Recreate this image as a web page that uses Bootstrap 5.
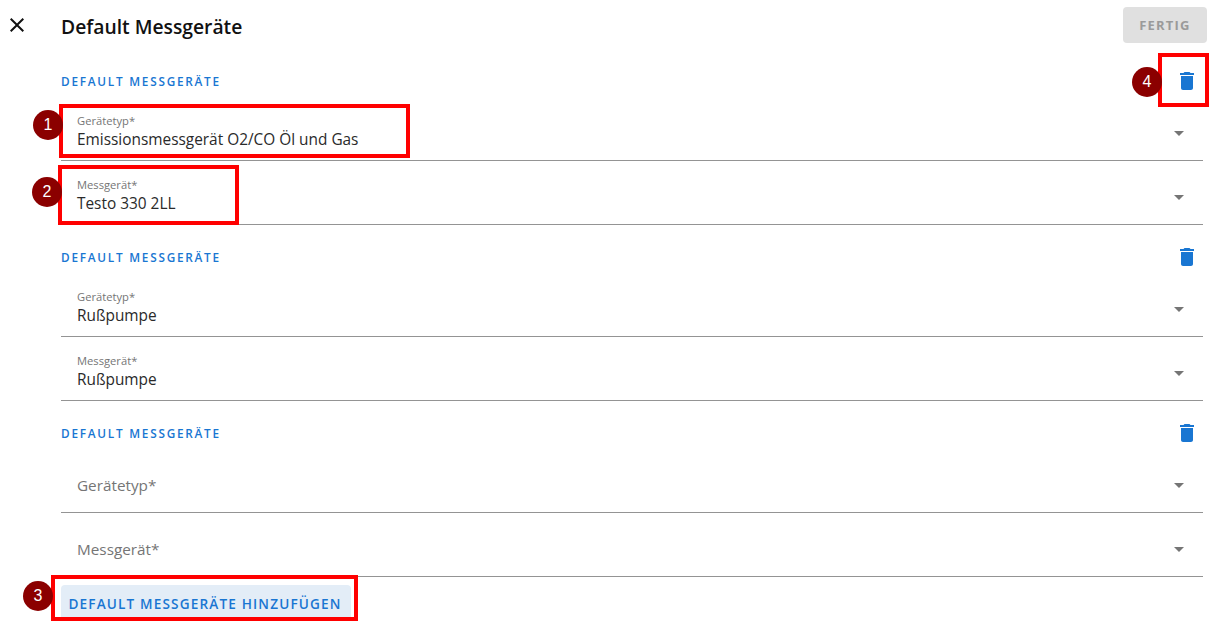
<!DOCTYPE html>
<html lang="de">
<head>
  <meta charset="UTF-8">
  <title>Default Messgeräte</title>
  <link href="https://cdn.jsdelivr.net/npm/bootstrap@5.3.0/dist/css/bootstrap.min.css" rel="stylesheet">
  <style>
    html, body { height: 621px; overflow: hidden; }
    body { font-family: "Open Sans", "Noto Sans", sans-serif; color: #1f1f1f; background: #fff; position: relative; }
    .top-bar { height: 49px; padding: 7px 4px 0 5px; }
    .close-btn { width: 56px; height: 36px; }
    .page-title { font-size: 19.3px; font-weight: 600; color: #111; line-height: 40px; margin: 0; }
    .done-btn { width: 84px; height: 36px; background: #e0e0e0; color: #9a9a9a; border: 0; border-radius: 4px; font-size: 13px; font-weight: 700; letter-spacing: 1.2px; padding: 2px 0 0; }
    .form-area { padding: 0 8px 0 61px; }
    .group-head { height: 48px; padding-top: 16px; }
    .group-title { font-size: 11.8px; font-weight: 600; letter-spacing: 1.75px; color: #1976d2; line-height: 16px; }
    .trash { width: 14px; height: 18px; margin-right: 9px; }
    .field-row { height: 64px; border-bottom: 1px solid #949494; padding: 10px 16px 0; }
    .field-text { padding-bottom: 2px; }
    .field-label { font-size: 11.2px; color: #757575; line-height: 14px; }
    .field-value { font-size: 15.4px; line-height: 24px; color: #2a2a2a; }
    .field-empty { font-size: 15.3px; color: #757575; }
    .caret-down { width: 0; height: 0; border-left: 5px solid transparent; border-right: 5px solid transparent; border-top: 5px solid #757575; margin-right: 3px; }
    .add-btn { margin-top: 8px; height: 36px; width: 290px; background: #e3edf7; color: #1976d2; border: 0; border-radius: 4px; font-size: 13.6px; font-weight: 600; letter-spacing: 1.15px; padding: 2px 2px 0 0; }
    .mark-box { position: absolute; border: 4px solid #f00; }
    .mark-num { position: absolute; width: 30px; height: 30px; border-radius: 50%; background: #8b0000; color: #fff; font-family: "Liberation Sans", sans-serif; font-size: 16px; line-height: 30px; text-align: center; }
  </style>
</head>
<body>
  <div class="top-bar d-flex align-items-start">
    <div class="close-btn d-flex align-items-center">
      <svg width="24" height="24" viewBox="0 0 24 24" fill="#111"><path d="M19 6.41 17.59 5 12 10.59 6.41 5 5 6.41 10.59 12 5 17.59 6.41 19 12 13.41 17.59 19 19 17.59 13.41 12z"/></svg>
    </div>
    <h1 class="page-title flex-grow-1">Default Messgeräte</h1>
    <button class="done-btn" type="button">FERTIG</button>
  </div>

  <div class="form-area">
    <div class="group-head d-flex justify-content-between align-items-center">
      <span class="group-title">DEFAULT MESSGERÄTE</span>
      <svg class="trash" viewBox="5 3 14 18" fill="#1976d2"><path d="M6 19c0 1.1.9 2 2 2h8c1.1 0 2-.9 2-2V7H6v12zM19 4h-3.5l-1-1h-5l-1 1H5v2h14V4z"/></svg>
    </div>
    <div class="field-row d-flex justify-content-between align-items-center">
      <div class="field-text"><div class="field-label">Gerätetyp*</div><div class="field-value">Emissionsmessgerät O2/CO Öl und Gas</div></div>
      <span class="caret-down"></span>
    </div>
    <div class="field-row d-flex justify-content-between align-items-center">
      <div class="field-text"><div class="field-label">Messgerät*</div><div class="field-value">Testo 330 2LL</div></div>
      <span class="caret-down"></span>
    </div>

    <div class="group-head d-flex justify-content-between align-items-center">
      <span class="group-title">DEFAULT MESSGERÄTE</span>
      <svg class="trash" viewBox="5 3 14 18" fill="#1976d2"><path d="M6 19c0 1.1.9 2 2 2h8c1.1 0 2-.9 2-2V7H6v12zM19 4h-3.5l-1-1h-5l-1 1H5v2h14V4z"/></svg>
    </div>
    <div class="field-row d-flex justify-content-between align-items-center">
      <div class="field-text"><div class="field-label">Gerätetyp*</div><div class="field-value">Rußpumpe</div></div>
      <span class="caret-down"></span>
    </div>
    <div class="field-row d-flex justify-content-between align-items-center">
      <div class="field-text"><div class="field-label">Messgerät*</div><div class="field-value">Rußpumpe</div></div>
      <span class="caret-down"></span>
    </div>

    <div class="group-head d-flex justify-content-between align-items-center">
      <span class="group-title">DEFAULT MESSGERÄTE</span>
      <svg class="trash" viewBox="5 3 14 18" fill="#1976d2"><path d="M6 19c0 1.1.9 2 2 2h8c1.1 0 2-.9 2-2V7H6v12zM19 4h-3.5l-1-1h-5l-1 1H5v2h14V4z"/></svg>
    </div>
    <div class="field-row d-flex justify-content-between align-items-center">
      <span class="field-empty">Gerätetyp*</span>
      <span class="caret-down"></span>
    </div>
    <div class="field-row d-flex justify-content-between align-items-center">
      <span class="field-empty">Messgerät*</span>
      <span class="caret-down"></span>
    </div>

    <button class="add-btn d-block" type="button">DEFAULT MESSGERÄTE HINZUFÜGEN</button>
  </div>

  <!-- annotation overlays -->
  <div class="mark-box" style="left:59px;top:104px;width:351px;height:54px"></div>
  <div class="mark-box" style="left:58px;top:165px;width:181px;height:60px"></div>
  <div class="mark-box" style="left:51px;top:575px;width:307px;height:46px"></div>
  <div class="mark-box" style="left:1158px;top:53px;width:51px;height:54px"></div>
  <div class="mark-num" style="left:33px;top:110px">1</div>
  <div class="mark-num" style="left:32px;top:177px">2</div>
  <div class="mark-num" style="left:23px;top:581px">3</div>
  <div class="mark-num" style="left:1132px;top:67px">4</div>

  <script src="https://cdn.jsdelivr.net/npm/bootstrap@5.3.0/dist/js/bootstrap.bundle.min.js"></script>
</body>
</html>
